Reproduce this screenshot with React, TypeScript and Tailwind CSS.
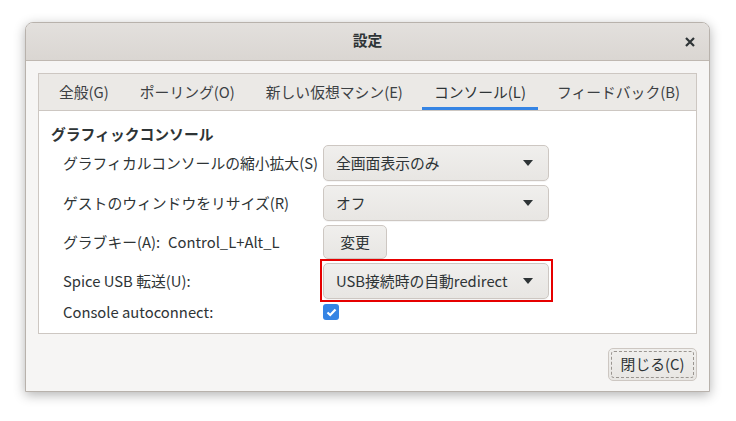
import React from 'react';

const font = { fontFamily: '"Noto Sans CJK JP", "Noto Sans", sans-serif' };

function Arrow() {
  return (
    <svg width="10" height="6" viewBox="0 0 10 6" className="shrink-0">
      <path d="M0 0 H10 L5 6 Z" fill="#2e3436" />
    </svg>
  );
}

function Combo({ text }: { text: string }) {
  return (
    <div className="flex h-[36px] w-[226px] items-center justify-between rounded-[5px] border border-[#cdc7c2] bg-gradient-to-b from-[#f0efed] to-[#e8e6e3] pl-[12px] pr-[15px] shadow-[0_1px_0_rgba(0,0,0,0.04)]">
      <span>{text}</span>
      <Arrow />
    </div>
  );
}

export default function App() {
  const tabs = ['全般(G)', 'ポーリング(O)', '新しい仮想マシン(E)', 'コンソール(L)', 'フィードバック(B)'];

  return (
    <div className="h-[421px] w-[736px] bg-white pl-[25px] pt-[22px] text-[14.8px] text-[#2e3436]" style={font}>
      <div className="flex h-[370px] w-[685px] flex-col overflow-hidden rounded-t-[8px] border border-[#b8b2ac] bg-[#f6f5f4] shadow-[0_3px_12px_rgba(0,0,0,0.3)]">
        {/* header bar */}
        <div className="relative flex h-[38px] shrink-0 items-center justify-center border-b border-[#bfb8b1] bg-gradient-to-b from-[#e3e0dd] to-[#dad6d2] pb-[2px]">
          <span className="font-bold">設定</span>
          <svg width="10" height="10" viewBox="0 0 10 10" className="absolute right-[14px] top-[14px]">
            <path d="M1 1 L9 9 M9 1 L1 9" stroke="#2e3436" strokeWidth="2.2" />
          </svg>
        </div>

        {/* notebook */}
        <div className="mx-[12px] mt-[12px] flex h-[261px] flex-col border border-[#cdc7c2] bg-white">
          <div className="flex h-[37px] shrink-0 items-stretch gap-[7px] border-b border-[#cdc7c2] bg-[#ebe9e6] pl-[8px]">
            {tabs.map((t, i) => (
              <div
                key={t}
                className={`flex items-center border-b-[3px] px-[12px] pt-[3px] ${i === 3 ? 'border-[#3584e4] text-[#2e3436]' : 'border-transparent text-[#3c4043]'}`}
              >
                {t}
              </div>
            ))}
          </div>

          <div className="flex flex-col pl-[12px] pt-[12px]">
            <div className="h-[22px] font-bold leading-[22px]">グラフィックコンソール</div>
            <div className="grid grid-cols-[260px_auto] items-center gap-y-[4px] pl-[12px]">
              <div>グラフィカルコンソールの縮小拡大(S)</div>
              <Combo text="全画面表示のみ" />

              <div>ゲストのウィンドウをリサイズ(R)</div>
              <Combo text="オフ" />

              <div className="flex gap-[8px]">
                <span>グラブキー(A):</span>
                <span>Control_L+Alt_L</span>
              </div>
              <div className="flex h-[34px] w-[64px] items-center justify-center rounded-[5px] border border-[#cdc7c2] bg-gradient-to-b from-[#f0efed] to-[#e8e6e3]">
                変更
              </div>

              <div>Spice USB 転送(U):</div>
              <div className="relative w-[226px]">
                <Combo text="USB接続時の自動redirect" />
                <div className="pointer-events-none absolute -bottom-[3px] -left-[3px] -right-[4px] -top-[4px] border-2 border-[#e60000]" />
              </div>

              <div className="-mt-[2px]">Console autoconnect:</div>
              <div className="-mt-[2px] flex h-[16px] w-[16px] items-center justify-center rounded-[3px] bg-[#3584e4]">
                <svg width="11" height="9" viewBox="0 0 11 9">
                  <path d="M1.5 4.5 L4.2 7 L9.5 1.5" stroke="white" strokeWidth="2.2" fill="none" />
                </svg>
              </div>
            </div>
          </div>
        </div>

        {/* footer */}
        <div className="flex justify-end pr-[12px] pt-[14px]">
          <div className="flex h-[33px] w-[89px] items-center justify-center rounded-[5px] border border-[#cdc7c2] bg-gradient-to-b from-[#f0efed] to-[#e8e6e3] p-[2px]">
            <div className="flex h-full w-full items-center justify-center rounded-[3px] border border-dashed border-[#9a9590]">
              閉じる(C)
            </div>
          </div>
        </div>
      </div>
    </div>
  );
}
